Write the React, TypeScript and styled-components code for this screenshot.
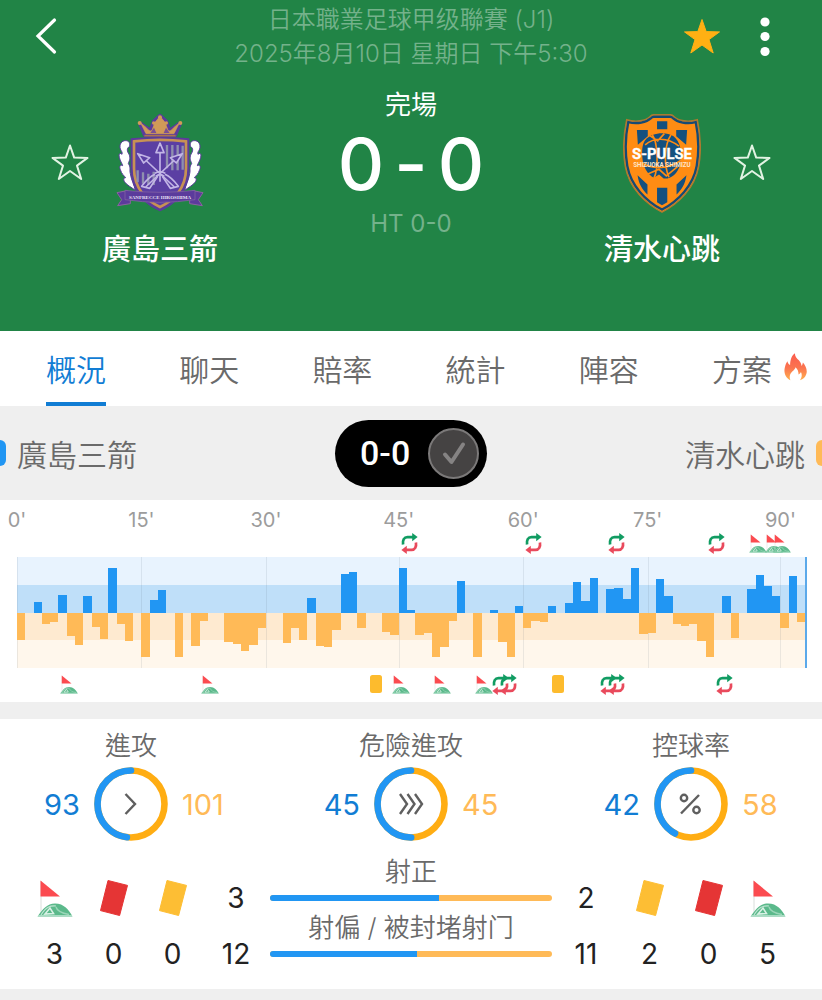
import React from "react";
import styled, { createGlobalStyle } from "styled-components";

const GlobalStyle = createGlobalStyle`
  *, *::before, *::after { box-sizing: border-box; }
  body {
    margin: 0;
    background: #efefef;
    color: #222;
    font-family: Inter, "Noto Sans CJK TC", sans-serif;
    font-weight: 400;
    overflow-x: hidden;
  }
  button {
    margin: 0;
    padding: 0;
    border: 0;
    background: none;
    color: inherit;
    font: inherit;
    cursor: pointer;
  }
  svg { display: block; }
  h1, h2, p { margin: 0; font: inherit; }
`;

const color = {
  green: "#218446",
  home: "#2196f3",
  homeText: "#117dd4",
  away: "#ffba57",
  ringAway: "#ffad13",
  grey: "#6a6a6a",
};

/* ---------- Header ---------- */

const Header = styled.header`
  background: ${color.green};
  color: #fff;
  padding: 3px 0 61px;
`;

const TopBar = styled.div`
  display: grid;
  grid-template-columns: 1fr auto 1fr;
  align-items: center;
  padding: 0 32px;
`;

const TitleBlock = styled.div`
  text-align: center;
  font-size: 24px;
  font-weight: 350;
  line-height: 34px;
  color: rgba(255, 255, 255, 0.38);
`;

const IconButton = styled.button`
  display: flex;
  align-items: center;
  justify-content: center;
`;

const Actions = styled.div`
  display: flex;
  justify-content: flex-end;
  align-items: center;
  gap: 35px;
  padding-right: 16px;
`;

const Scoreboard = styled.div`
  display: flex;
  justify-content: space-between;
  align-items: flex-start;
  padding: 0 51px;
`;

const Team = styled.div<{ $mirrored?: boolean }>`
  display: grid;
  grid-template-columns: ${(p) => (p.$mirrored ? "118px 38px" : "38px 118px")};
  grid-template-areas: ${(p) =>
    p.$mirrored ? `"crest star" "name ." ` : `"star crest" ". name"`};
  column-gap: 12px;
  row-gap: 14px;
  align-items: center;
  justify-items: center;
  padding-top: 41px;
`;

const FollowButton = styled(IconButton)`
  grid-area: star;
`;

const Crest = styled.div`
  grid-area: crest;
  height: 102px;
  display: flex;
  align-items: center;
`;

const TeamName = styled.h2`
  grid-area: name;
  font-size: 29px;
  font-weight: 500;
  line-height: 40px;
  padding-top: 2px;
  white-space: nowrap;
`;

const ScoreBlock = styled.div`
  display: flex;
  flex-direction: column;
  align-items: center;
  padding-top: 18px;
`;

const Status = styled.p`
  font-size: 26px;
  line-height: 32px;
`;

const Score = styled.p`
  display: flex;
  justify-content: center;
  gap: 10px;
  margin: 7px 0 8px;
  font-size: 72px;
  font-weight: 500;
  line-height: 72px;
`;

const HalfTime = styled.p`
  font-size: 24px;
  font-weight: 400;
  line-height: 32px;
  color: rgba(255, 255, 255, 0.38);
`;

/* ---------- Tabs ---------- */

const Tabs = styled.nav`
  display: flex;
  justify-content: space-between;
  padding: 0 15px 0 46px;
  background: #fff;
`;

const Tab = styled.button<{ $active?: boolean }>`
  display: flex;
  align-items: center;
  gap: 12px;
  height: 75px;
  padding-top: 6px;
  border-bottom: 4px solid ${(p) => (p.$active ? color.homeText : "transparent")};
  color: ${(p) => (p.$active ? color.homeText : color.grey)};
  font-size: 30px;
  font-weight: 350;
  line-height: 40px;
`;

const TabIcon = styled.span`
  padding-bottom: 6px;
`;

/* ---------- Teams strip ---------- */

const TeamsStrip = styled.div`
  display: grid;
  grid-template-columns: 1fr auto 1fr;
  align-items: center;
  height: 94px;
`;

const StripTeam = styled.div<{ $away?: boolean }>`
  display: flex;
  flex-direction: ${(p) => (p.$away ? "row-reverse" : "row")};
  align-items: center;
  gap: 11px;
  font-size: 30px;
  font-weight: 350;
  color: ${color.grey};
`;

const TeamSwatch = styled.span<{ $away?: boolean }>`
  width: 6px;
  height: 26px;
  border-radius: ${(p) => (p.$away ? "6px 0 0 6px" : "0 6px 6px 0")};
  background: ${(p) => (p.$away ? color.away : color.home)};
`;

const ScorePill = styled.button`
  display: flex;
  align-items: center;
  justify-content: space-between;
  width: 152px;
  height: 67px;
  padding: 0 8px 0 25px;
  border-radius: 34px;
  background: #000;
  color: #fff;
  font-family: Roboto, sans-serif;
  font-size: 34px;
  font-weight: 500;
`;

const PillCheck = styled.span`
  display: flex;
  align-items: center;
  justify-content: center;
  width: 51px;
  height: 51px;
  border: 2px solid #7b7979;
  border-radius: 50%;
  background: #454343;
`;

/* ---------- Timeline ---------- */

const Timeline = styled.section`
  padding: 8px 15px 8px 17px;
  background: #fff;
`;

const TimelineTrack = styled.div<{ $height: number }>`
  position: relative;
  height: ${(p) => p.$height}px;
`;

const Tick = styled.span`
  position: absolute;
  transform: translateX(-50%);
  font-size: 20px;
  line-height: 24px;
  color: #9c9c9c;
`;

const EventMark = styled.span`
  position: absolute;
  top: 0;
  display: flex;
  align-items: center;
  justify-content: center;
  width: 20px;
  height: 20px;
  margin-left: -8px;
`;

const MomentumChart = styled.svg`
  width: 100%;
  height: 111px;
  margin: 4px 0 6px;
`;

/* ---------- Statistics ---------- */

const Stats = styled.section`
  margin-top: 17px;
  padding: 11px 0 7px;
  background: #fff;
`;

const RingRow = styled.div`
  display: flex;
  justify-content: space-between;
  padding: 0 38px;
`;

const RingStat = styled.div`
  display: grid;
  grid-template-columns: 56px 74px 56px;
  align-items: center;
  row-gap: 5px;
  font-size: 29px;
`;

const RingLabel = styled.h2`
  grid-column: 1 / -1;
  text-align: center;
  font-size: 26px;
  font-weight: 350;
  line-height: 32px;
  color: ${color.grey};
`;

const RingValue = styled.span<{ $away?: boolean }>`
  padding: 0 14px;
  display: flex;
  justify-content: ${(p) => (p.$away ? "flex-start" : "flex-end")};
  color: ${(p) => (p.$away ? color.away : color.homeText)};
`;

const DetailRow = styled.div`
  display: flex;
  align-items: flex-start;
  padding: 0 25px;
  margin-top: 15px;
`;

const CardGroup = styled.div`
  display: flex;
  padding-top: 14px;
`;

const CardCount = styled.div`
  display: flex;
  flex-direction: column;
  align-items: center;
  width: 59px;
  font-size: 28px;
  line-height: 56px;
`;

const CardIcon = styled.span`
  display: flex;
  align-items: center;
  height: 56px;
`;

const Shots = styled.div`
  flex: 1;
`;

const ShotRow = styled.div`
  display: grid;
  grid-template-columns: 68px 1fr 68px;
  height: 56px;
`;

const ShotValue = styled.span`
  padding-top: 28px;
  text-align: center;
  font-size: 28px;
  line-height: 28px;
`;

const ShotLabel = styled.p`
  margin-bottom: 7px;
  text-align: center;
  font-size: 26px;
  font-weight: 350;
  line-height: 32px;
  color: ${color.grey};
  white-space: nowrap;
`;

const ShotBar = styled.div`
  height: 6px;
  border-radius: 3px;
  overflow: hidden;
  background: ${color.away};
`;

const ShotFill = styled.div`
  height: 100%;
  background: ${color.home};
`;

/* ---------- Icons ---------- */

const STAR =
  "M19 2.5 L23.2 14.6 L36.5 14.9 L26 22.6 L30.2 36 L19 28 L7.8 36 L12 22.6 L1.5 14.9 L14.8 14.6 Z";

const StarOutline = () => (
  <svg width="38" height="40" viewBox="0 0 38 40">
    <path d={STAR} fill="none" stroke="#e2f3e3" strokeWidth="2" strokeLinejoin="round" />
  </svg>
);

const StarFilled = () => (
  <svg width="38" height="40" viewBox="0 0 38 40">
    <path d={STAR} fill="#ffb013" stroke="#ffb013" strokeWidth="1" />
  </svg>
);

const BackIcon = () => (
  <svg width="28" height="40" viewBox="0 0 28 40">
    <path d="M22.5 3 L6 19 L22.5 35" fill="none" stroke="#fff" strokeWidth="3.2" strokeLinecap="round" />
  </svg>
);

const MoreIcon = () => (
  <svg width="18" height="40" viewBox="0 0 18 40">
    <g fill="#fff">
      <circle cx="9" cy="5" r="4.6" />
      <circle cx="9" cy="19.5" r="4.6" />
      <circle cx="9" cy="34.5" r="4.6" />
    </g>
  </svg>
);

const FlameIcon = () => (
  <svg width="23" height="28" viewBox="0 0 68 82">
    <defs>
      <linearGradient id="flame" x1="0" y1="0" x2="0" y2="1">
        <stop offset="0" stopColor="#fb5b4d" />
        <stop offset="0.55" stopColor="#fb7550" />
        <stop offset="1" stopColor="#ffb04d" />
      </linearGradient>
    </defs>
    <path
      fill="url(#flame)"
      d="M19 80 C4 73 -2 56 3 40 C5 32 8 27 10 24 C12 30 14 34 18 35 C18 20 23 6 32 0 C33 11 38 15 44 21 C49 27 51 32 52 38 C54 36 55 32 56 28 C64 37 70 51 66 62 C63 72 57 77 47 80 C53 72 54 63 50 56 C48 60 46 62 43 63 C43 54 40 47 34 42 C33 50 22 54 18 64 C16 71 17 76 19 80 Z"
    />
  </svg>
);

const CheckIcon = () => (
  <svg width="26" height="26" viewBox="0 0 26 26">
    <path d="M4 14.5 L10.5 22 L22 4.5" fill="none" stroke="#858383" strokeWidth="4" strokeLinecap="round" strokeLinejoin="round" />
  </svg>
);

const SubIcon = () => (
  <svg width="17" height="21" viewBox="0 0 48 62">
    <path d="M5 34 C3 21 8 12 18 12 H35" fill="none" stroke="#119c62" strokeWidth="8" />
    <path d="M32 0 L48 12 L32 24 Z" fill="#119c62" />
    <path d="M43 28 C45 41 40 50 30 50 H13" fill="none" stroke="#e94a5c" strokeWidth="8" />
    <path d="M16 38 L0 50 L16 62 Z" fill="#e94a5c" />
  </svg>
);

const CornerIcon = ({ size = 36 }: { size?: number }) => (
  <svg width={size} height={size + 1} viewBox="0 0 36 37">
    <path d="M4 1 V34" stroke="#d9dedb" strokeWidth="1" />
    <path d="M3.5 0.5 L23 16.5 H3.5 Z" fill="#fb4b50" />
    <path d="M0.5 36.5 C6 29 10 23.5 18 23.5 C27 23.5 32 30 35.5 36.5 Z" fill="#5bb98b" />
    <path d="M4 35 C9 27 13 25.5 19 26" fill="none" stroke="#bfe5d2" strokeWidth="1.2" />
    <path d="M19 27 C20 31 24 33 32 34.5" fill="none" stroke="#9ad6b8" strokeWidth="1.4" />
    <path d="M8 34 L13 28 L16.5 33.5 Z" fill="none" stroke="#d9f1e5" strokeWidth="1.6" />
    <path d="M1 35.5 H35" stroke="#a9dcc3" strokeWidth="1" />
  </svg>
);

const MiniCard = () => (
  <svg width="12" height="18" viewBox="0 0 12 18">
    <rect width="12" height="18" rx="2.5" fill="#fdbb2d" />
  </svg>
);

const TiltedCard = ({ fill }: { fill: string }) => (
  <svg width="28" height="36" viewBox="0 0 28 36">
    <path d="M8 0.5 L27.5 5.4 L19.6 35.5 L0.5 30.6 Z" fill={fill} stroke={fill} strokeLinejoin="round" />
  </svg>
);

const SanfrecceCrest = () => (
  <svg width="88" height="100" viewBox="33 24 264 300" role="img" aria-label="Sanfrecce Hiroshima">
    <path
      d="M120 90 L106 56 L122 68 L137 78 L147 50 L165 33 L183 50 L193 78 L208 68 L224 56 L210 90 Z"
      fill="#5b3b9c" stroke="#5b3b9c" strokeWidth="13" strokeLinejoin="round"
    />
    <path
      d="M123 86 L107 54 L124 68 Q134 82 141 76 L150 52 L165 34 L180 52 L189 76 Q196 82 206 68 L223 54 L207 86 Z"
      fill="#d09a58" stroke="#d09a58" strokeWidth="2" strokeLinejoin="round"
    />
    <path d="M136 84 L147 68 L154 84 Z M194 84 L183 68 L176 84 Z" fill="#7a4f93" />
    <path d="M118 92 H212" stroke="#a9744f" strokeWidth="5" />
    <g fill="#d09a58">
      <circle cx="104" cy="54" r="6" />
      <circle cx="226" cy="54" r="6" />
      <circle cx="165" cy="37" r="6" />
      <circle cx="146" cy="54" r="5" />
      <circle cx="184" cy="54" r="5" />
    </g>
    <g fill="#fff" stroke="#5b3b9c" strokeWidth="3" strokeLinejoin="round">
      <path d="M62 107 C50 106 42 118 46 132 C49 139 53 141 51 148 C46 142 40 146 43 157 C46 170 51 174 53 182 C46 178 42 184 46 194 C50 207 57 212 62 218 C56 218 54 224 60 232 C68 242 78 246 91 256 C88 240 79 226 76 206 C73 194 78 186 70 176 C72 168 78 160 72 148 C66 138 64 130 74 124 C76 112 70 107 62 107 Z" />
      <path d="M268 107 C280 106 288 118 284 132 C281 139 277 141 279 148 C284 142 290 146 287 157 C284 170 279 174 277 182 C284 178 288 184 284 194 C280 207 273 212 268 218 C274 218 276 224 270 232 C262 242 252 246 239 256 C242 240 251 226 254 206 C257 194 252 186 260 176 C258 168 252 160 258 148 C264 138 266 130 256 124 C254 112 260 107 268 107 Z" />
    </g>
    <path d="M77 100 Q165 92 253 100 V190 C253 260 210 300 165 319 C120 300 77 260 77 190 Z" fill="#5b3b9c" />
    <path d="M87 109 Q165 100 243 109 V190 C243 250 206 287 165 306 C124 287 87 250 87 190 Z" fill="#5b3fa3" stroke="#c79254" strokeWidth="8" />
    <g stroke="#8f8fae" strokeWidth="7">
      <path d="M186 120 V190 M202 120 V196 M218 120 V196 M233 122 V194" />
      <path d="M98 196 V232 M114 202 V236 M130 206 V240 M146 200 V240" />
    </g>
    <g fill="none" stroke="#c2b5e6" strokeWidth="5" strokeLinejoin="round">
      <path d="M165 140 V230 M112 156 L208 246 M218 156 L122 246" />
      <path d="M165 114 L153 143 H177 Z M98 146 L116 174 L134 158 Z M232 146 L196 158 L214 174 Z" fill="#5b3fa3" />
      <path d="M149 205 Q165 195 181 205 M152 214 Q165 204 178 214" />
      <path d="M150 208 C136 214 122 228 110 244 L134 250 C142 238 150 226 158 214 M180 208 C194 214 208 228 220 244 L196 250 C188 238 180 226 172 214" />
    </g>
    <path d="M36 263 L66 257 L76 264 V296 L38 302 L50 284 Z M294 263 L264 257 L254 264 V296 L292 302 L280 284 Z" fill="#5b3b9c" stroke="#8c62a0" strokeWidth="3" />
    <path d="M60 256 Q165 268 270 256 V284 Q165 300 60 284 Z" fill="#5b3b9c" stroke="#8a6aa5" strokeWidth="2" />
    <text x="165" y="282" textAnchor="middle" fill="#e9e2f6" fontFamily="Liberation Serif, serif" fontWeight="700" fontSize="15">
      SANFRECCE HIROSHIMA
    </text>
  </svg>
);

const SPulseCrest = () => (
  <svg width="78" height="102" viewBox="37 20 236 306" role="img" aria-label="S-Pulse">
    <path
      d="M48 42 C75 50 105 46 119 32 Q123 27 129 27 H181 Q187 27 191 32 C205 46 235 50 262 42 C272 90 274 140 266 184 C254 250 205 296 155 322 C105 296 56 250 44 184 C36 140 38 90 48 42 Z"
      fill="#ff8c13" stroke="#ab7a30" strokeWidth="4"
    />
    <path
      d="M53 49 C80 56 108 50 122 37 Q126 33 130 33 H180 Q184 33 188 37 C202 50 230 56 257 49 C266 92 267 140 260 182 C249 243 203 288 155 314 C107 288 61 243 50 182 C43 140 44 92 53 49 Z"
      fill="#ff8c13" stroke="#164a74" strokeWidth="7"
    />
    <g fill="#14507f">
      <path d="M140 47 H171 V71 H140 Z M79 73 H112 V92 L82 118 Z M231 73 H198 V92 L228 118 Z" />
      <path d="M81 210 L111 238 V268 C96 254 85 238 81 210 Z M229 210 L199 238 V268 C214 254 225 238 229 210 Z M140 248 H171 V292 L155 301 L140 292 Z" />
      <path d="M104 104 C122 82 165 76 190 92 C210 108 217 138 210 178 C202 206 182 222 160 220 L146 208 L130 218 C110 206 98 184 96 160 C94 138 94 118 104 104 Z" />
    </g>
    <g fill="none" stroke="#ff8c13" strokeWidth="5">
      <path d="M104 118 C130 96 170 94 206 122 M126 88 C142 110 146 190 130 220 M182 88 C162 118 160 180 176 216 M96 174 C130 194 178 190 214 164 M118 90 L142 106 L162 84 M112 206 L146 192 L168 212 L202 184" />
    </g>
    <text x="155" y="160" textAnchor="middle" fill="#fff" stroke="#fff" strokeWidth="1" fontFamily="Roboto, sans-serif" fontWeight="700" fontSize="45">
      S-PULSE
    </text>
    <text x="155" y="186" textAnchor="middle" fill="#ffe6c9" fontFamily="Roboto, sans-serif" fontWeight="700" fontSize="19">
      SHIZUOKA SHIMIZU
    </text>
  </svg>
);

const ChevronGlyph = () => (
  <path d="M31.5 27 L41 37 L31.5 47" />
);
const TripleChevronGlyph = () => (
  <path d="M26 27 L33 37 L26 47 M33.5 27 L40.5 37 L33.5 47 M41 27 L48 37 L41 47" />
);
const PercentGlyph = () => (
  <>
    <circle cx="30" cy="31" r="3.2" />
    <circle cx="42.5" cy="43" r="3.2" />
    <path d="M45 28 L27 46.5" />
  </>
);

const RADIUS = 33.5;
const CIRCUMFERENCE = 2 * Math.PI * RADIUS;

const Ring = ({ share, children }: { share: number; children: React.ReactNode }) => (
  <svg width="74" height="74" viewBox="0 0 74 74">
    <circle cx="37" cy="37" r={RADIUS} fill="none" stroke={color.ringAway} strokeWidth="6.6" />
    <circle
      cx="37"
      cy="37"
      r={RADIUS}
      fill="none"
      stroke={color.home}
      strokeWidth="6.6"
      strokeLinecap="round"
      strokeDasharray={`${share * CIRCUMFERENCE} ${CIRCUMFERENCE}`}
      transform="matrix(0 -1 -1 0 74 74)"
    />
    <g fill="none" stroke="#5f5f5f" strokeWidth="2.4">
      {children}
    </g>
  </svg>
);

/* ---------- Data ---------- */

const SLOTS = 95.2;

const homeBars: [number, number][] = [
  [2, 11], [5, 18], [8, 17], [11, 45], [16, 13], [17, 23], [35, 15], [39, 39], [40, 41],
  [46, 45], [47, 3], [53, 32], [57, 3], [60, 7], [64, 7], [66, 10], [67, 31], [68, 12],
  [69, 35], [71, 24], [72, 25], [73, 14], [74, 45], [77, 34], [78, 17], [85, 17], [88, 24],
  [89, 38], [90, 27], [91, 17], [93, 37],
];

const awayBars: [number, number][] = [
  [0, 27], [3, 11], [4, 9], [6, 23], [7, 32], [9, 14], [10, 26], [12, 11], [13, 28],
  [15, 44], [19, 44], [21, 33], [22, 8], [25, 29], [26, 31], [27, 38], [28, 32], [29, 15],
  [32, 30], [33, 15], [34, 27], [36, 33], [37, 34], [38, 17], [41, 15], [44, 19], [45, 22],
  [48, 22], [49, 20], [50, 44], [51, 34], [52, 8], [55, 44], [58, 29], [59, 44], [61, 15],
  [62, 8], [63, 9], [75, 21], [76, 20], [79, 11], [80, 13], [81, 11], [82, 28], [83, 44],
  [86, 25], [92, 15], [94, 9],
];

const ticks: [number, string][] = [
  [0, "0'"], [15, "15'"], [30, "30'"], [46, "45'"], [61, "60'"], [76, "75'"], [92, "90'"],
];

type EventKind = "sub" | "corner" | "yellow";

const homeEvents: [number, EventKind][] = [
  [47, "sub"], [62, "sub"], [72, "sub"], [84, "sub"], [89, "corner"], [91, "corner"], [92, "corner"],
];

const awayEvents: [number, EventKind][] = [
  [6, "corner"], [23, "corner"], [43, "yellow"], [46, "corner"], [51, "corner"], [56, "corner"],
  [58, "sub"], [59, "sub"], [65, "yellow"], [71, "sub"], [72, "sub"], [85, "sub"],
];

const at = (slot: number) => ({ left: `${(slot / SLOTS) * 100}%` });

const eventIcon = {
  sub: <SubIcon />,
  corner: <CornerIcon size={18} />,
  yellow: <MiniCard />,
};

const Events = ({ items }: { items: [number, EventKind][] }) => (
  <TimelineTrack $height={20}>
    {items.map(([slot, kind]) => (
      <EventMark key={`${slot}${kind}`} style={at(slot)}>
        {eventIcon[kind]}
      </EventMark>
    ))}
  </TimelineTrack>
);

const Momentum = () => (
  <MomentumChart viewBox="0 0 952 111" preserveAspectRatio="none" shapeRendering="crispEdges">
    <rect width="952" height="28" fill="#e8f3fe" />
    <rect y="28" width="952" height="28" fill="#bfdff9" />
    <rect y="56" width="952" height="27" fill="#feead0" />
    <rect y="83" width="952" height="28" fill="#fff7ec" />
    {ticks.map(([slot]) => (
      <rect key={slot} x={slot * 10} width="1.2" height="111" fill="#5a6a7a" opacity="0.12" />
    ))}
    {homeBars.map(([slot, h]) => (
      <rect key={slot} x={slot * 10} y={56 - h} width="10" height={h} fill={color.home} />
    ))}
    {awayBars.map(([slot, h]) => (
      <rect key={slot} x={slot * 10} y="56" width="10" height={h} fill={color.away} />
    ))}
    <rect x="949.6" width="2.4" height="111" fill="#5ba9ea" />
  </MomentumChart>
);

const tabs = ["概況", "聊天", "賠率", "統計", "陣容", "方案"];

const rings = [
  { label: "進攻", home: 93, away: 101, glyph: <ChevronGlyph /> },
  { label: "危險進攻", home: 45, away: 45, glyph: <TripleChevronGlyph /> },
  { label: "控球率", home: 42, away: 58, glyph: <PercentGlyph /> },
];

const shots = [
  { label: "射正", home: 3, away: 2 },
  { label: "射偏 / 被封堵射门", home: 12, away: 11 },
];

const red = <TiltedCard fill="#e53535" />;
const yellow = <TiltedCard fill="#fdbe34" />;

const Counts = ({ items }: { items: [React.ReactNode, number][] }) => (
  <CardGroup>
    {items.map(([icon, count], i) => (
      <CardCount key={i}>
        <CardIcon>{icon}</CardIcon>
        {count}
      </CardCount>
    ))}
  </CardGroup>
);

export default function App() {
  return (
    <>
      <GlobalStyle />
      <Header>
        <TopBar>
          <div>
            <IconButton aria-label="返回">
              <BackIcon />
            </IconButton>
          </div>
          <TitleBlock>
            <h1>日本職業足球甲级聯賽 (J1)</h1>
            <p>2025年8月10日 星期日 下午5:30</p>
          </TitleBlock>
          <Actions>
            <IconButton aria-label="收藏">
              <StarFilled />
            </IconButton>
            <IconButton aria-label="更多">
              <MoreIcon />
            </IconButton>
          </Actions>
        </TopBar>
        <Scoreboard>
          <Team>
            <FollowButton aria-label="關注廣島三箭">
              <StarOutline />
            </FollowButton>
            <Crest>
              <SanfrecceCrest />
            </Crest>
            <TeamName>廣島三箭</TeamName>
          </Team>
          <ScoreBlock>
            <Status>完場</Status>
            <Score>
              <span>0</span>
              <span>-</span>
              <span>0</span>
            </Score>
            <HalfTime>HT 0-0</HalfTime>
          </ScoreBlock>
          <Team $mirrored>
            <Crest>
              <SPulseCrest />
            </Crest>
            <FollowButton aria-label="關注清水心跳">
              <StarOutline />
            </FollowButton>
            <TeamName>清水心跳</TeamName>
          </Team>
        </Scoreboard>
      </Header>

      <Tabs>
        {tabs.map((name, i) => (
          <Tab key={name} $active={i === 0}>
            {name}
            {name === "方案" && (
              <TabIcon>
                <FlameIcon />
              </TabIcon>
            )}
          </Tab>
        ))}
      </Tabs>

      <TeamsStrip>
        <StripTeam>
          <TeamSwatch />
          廣島三箭
        </StripTeam>
        <ScorePill>
          0-0
          <PillCheck>
            <CheckIcon />
          </PillCheck>
        </ScorePill>
        <StripTeam $away>
          <TeamSwatch $away />
          清水心跳
        </StripTeam>
      </TeamsStrip>

      <Timeline>
        <TimelineTrack $height={25}>
          {ticks.map(([slot, label]) => (
            <Tick key={slot} style={at(slot)}>
              {label}
            </Tick>
          ))}
        </TimelineTrack>
        <Events items={homeEvents} />
        <Momentum />
        <Events items={awayEvents} />
      </Timeline>

      <Stats>
        <RingRow>
          {rings.map((r) => (
            <RingStat key={r.label}>
              <RingLabel>{r.label}</RingLabel>
              <RingValue>{r.home}</RingValue>
              <Ring share={r.home / (r.home + r.away)}>{r.glyph}</Ring>
              <RingValue $away>{r.away}</RingValue>
            </RingStat>
          ))}
        </RingRow>
        <DetailRow>
          <Counts items={[[<CornerIcon />, 3], [red, 0], [yellow, 0]]} />
          <Shots>
            {shots.map((s) => (
              <ShotRow key={s.label}>
                <ShotValue>{s.home}</ShotValue>
                <div>
                  <ShotLabel>{s.label}</ShotLabel>
                  <ShotBar>
                    <ShotFill style={{ width: `${(s.home / (s.home + s.away)) * 100}%` }} />
                  </ShotBar>
                </div>
                <ShotValue>{s.away}</ShotValue>
              </ShotRow>
            ))}
          </Shots>
          <Counts items={[[yellow, 2], [red, 0], [<CornerIcon />, 5]]} />
        </DetailRow>
      </Stats>
    </>
  );
}
